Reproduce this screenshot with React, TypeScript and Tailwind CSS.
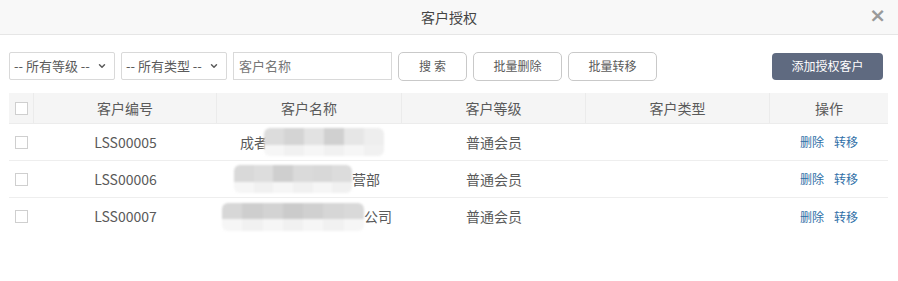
import React from "react";
import { ChevronDown } from "lucide-react";

const font = { fontFamily: '"Noto Sans CJK SC", "Noto Sans", sans-serif' };

function Check() {
  return <span className="inline-block w-[13px] h-[13px] border border-[#cfcfcf] bg-white" />;
}

function Mosaic({ shades, w, h }: { shades: string[]; w: number; h: number }) {
  return (
    <span className="inline-flex flex-col blur-[1px] rounded-[6px] overflow-hidden" style={{ width: w, height: h }}>
      <span className="flex flex-1">
        {shades.map((c, i) => (
          <span key={i} className="flex-1" style={{ background: c }} />
        ))}
      </span>
      <span className="flex h-[40%]">
        {shades.map((c, i) => (
          <span key={i} className="flex-1" style={{ background: i % 2 ? "#f1f1f1" : "#f6f6f6" }} />
        ))}
      </span>
    </span>
  );
}

const rows = [
  { id: "LSS00005", pre: "成者", suf: "", shades: ["#dcdcdc", "#d4d4d4", "#e2e2e2", "#d0d0d0", "#e6e6e6", "#eeeeee"], w: 120, pad: "pl-[23px]" },
  { id: "LSS00006", pre: "", suf: "营部", shades: ["#d9d9d9", "#dddddd", "#cfcfcf", "#dadada", "#d8d8d8", "#dcdcdc"], w: 118, pad: "pl-[17px]" },
  { id: "LSS00007", pre: "", suf: "公司", shades: ["#d7d7d7", "#cecece", "#d3d3d3", "#cbcbcb", "#d0d0d0", "#d6d6d6", "#d9d9d9"], w: 142, pad: "pl-[5px]" },
];

export default function App() {
  return (
    <div className="w-[898px] h-[281px] bg-white text-[#5a5a5a]" style={font}>
      <div className="relative h-[35px] bg-[#f8f8f8] border-b border-[#e6e6e6] flex items-center justify-center">
        <span className="text-[14px] text-[#444]">客户授权</span>
        <span className="absolute right-[12px] top-[5px] text-[20px] leading-[20px] font-bold text-[#9a9a9a]" style={{ fontFamily: '"DejaVu Sans", sans-serif' }}>×</span>
      </div>

      <div className="flex items-center pl-[9px] pr-[15px] mt-[17px] h-[28px] text-[13px]">
        <div className="w-[106px] h-[28px] border border-[#d9d9d9] rounded-[2px] flex items-center justify-between pl-[4px] pr-[7px]">
          <span>-- 所有等级 --</span>
          <ChevronDown size={10} strokeWidth={3.5} />
        </div>
        <div className="ml-[6px] w-[106px] h-[28px] border border-[#d9d9d9] rounded-[2px] flex items-center justify-between pl-[4px] pr-[7px]">
          <span>-- 所有类型 --</span>
          <ChevronDown size={10} strokeWidth={3.5} />
        </div>
        <div className="ml-[6px] w-[159px] h-[28px] border border-[#d9d9d9] flex items-center pl-[5px] text-[#777]">客户名称</div>
        <div className="ml-[6px] w-[69px] h-[29px] border border-[#c9c9c9] rounded-[5px] flex items-center justify-center text-[12px] tracking-[3px] pl-[3px]">搜索</div>
        <div className="ml-[6px] w-[89px] h-[29px] border border-[#c9c9c9] rounded-[5px] flex items-center justify-center text-[12px]">批量删除</div>
        <div className="ml-[6px] w-[89px] h-[29px] border border-[#c9c9c9] rounded-[5px] flex items-center justify-center text-[12px]">批量转移</div>
        <div className="ml-auto w-[111px] h-[27px] bg-[#5f6a80] rounded-[4px] flex items-center justify-center text-[12px] text-white">添加授权客户</div>
      </div>

      <div className="ml-[9px] w-[879px] mt-[13px] text-[14px]">
        <div className="flex h-[31px] bg-[#f5f5f5] items-center border-b border-[#ececec]">
          <div className="w-[25px] flex justify-center h-full items-center border-r border-[#ebebeb]"><Check /></div>
          <div className="w-[183px] text-center h-full flex items-center justify-center border-r border-[#ebebeb]">客户编号</div>
          <div className="w-[185px] text-center h-full flex items-center justify-center border-r border-[#ebebeb]">客户名称</div>
          <div className="w-[184px] text-center h-full flex items-center justify-center border-r border-[#ebebeb]">客户等级</div>
          <div className="w-[184px] text-center h-full flex items-center justify-center border-r border-[#ebebeb]">客户类型</div>
          <div className="w-[118px] text-center">操作</div>
        </div>
        {rows.map((r, idx) => (
          <div key={r.id} className={`flex h-[37px] items-center ${idx < rows.length - 1 ? "border-b border-[#eeeeee]" : ""}`}>
            <div className="w-[25px] flex justify-center"><Check /></div>
            <div className="w-[183px] text-center">{r.id}</div>
            <div className={`w-[185px] flex items-center ${r.pad}`}>
              {r.pre && <span>{r.pre}</span>}
              <span className={r.pre ? "-ml-[4px]" : ""}><Mosaic shades={r.shades} w={r.w} h={28} /></span>
              {r.suf && <span>{r.suf}</span>}
            </div>
            <div className="w-[184px] text-center">普通会员</div>
            <div className="w-[184px]" />
            <div className="w-[118px] flex justify-center gap-[10px] text-[12px] text-[#2f6fa7]">
              <span>删除</span>
              <span>转移</span>
            </div>
          </div>
        ))}
      </div>
    </div>
  );
}
